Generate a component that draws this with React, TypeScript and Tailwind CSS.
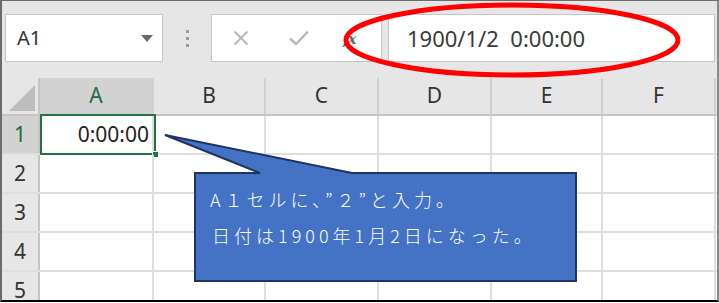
import React from "react";

const cols = [
  { name: "A", w: "w-[114px]" },
  { name: "B", w: "w-[112px]" },
  { name: "C", w: "w-[113px]" },
  { name: "D", w: "w-[113px]" },
  { name: "E", w: "w-[111px]" },
  { name: "F", w: "w-[113px]" },
];

const rows = [1, 2, 3, 4, 5];

export default function App() {
  return (
    <div className="relative h-[303px] w-[719px] overflow-hidden bg-white font-['Noto_Sans','Noto_Sans_CJK_JP',sans-serif]">
      <div className="h-[302px] w-[719px] overflow-hidden border-t border-l-2 border-r-2 border-b-2 border-t-[#6b6b6b] border-l-[#6b6b6b] border-r-[#8a8a8a] border-b-black">
        {/* Formula bar */}
        <div className="flex h-[77px] items-start bg-[#e6e6e6] pt-[13px] pl-[3px]">
          <div className="flex h-[48px] w-[158px] items-center justify-between border border-[#c6c6c6] bg-white pl-[11px] pr-[9px]">
            <span className="text-[20px] text-[#333]">A1</span>
            <svg width="12" height="7" viewBox="0 0 12 7">
              <path d="M0 0 L12 0 L6 7 Z" fill="#6b6b6b" />
            </svg>
          </div>
          <div className="flex h-[48px] w-[48px] flex-col items-center justify-center gap-[4px]">
            <span className="h-[3px] w-[3px] bg-[#9a9a9a]" />
            <span className="h-[3px] w-[3px] bg-[#9a9a9a]" />
            <span className="h-[3px] w-[3px] bg-[#9a9a9a]" />
          </div>
          <div className="flex h-[48px] w-[171px] items-center border border-[#c6c6c6] bg-white">
            <svg className="ml-[21px]" width="16" height="16" viewBox="0 0 16 16">
              <path d="M1.5 1.5 L14.5 14.5 M14.5 1.5 L1.5 14.5" stroke="#b9b9b9" strokeWidth="2" />
            </svg>
            <svg className="ml-[40px]" width="20" height="16" viewBox="0 0 20 16">
              <path d="M1 8.5 L7 14 L19 1.5" stroke="#b9b9b9" strokeWidth="2.4" fill="none" />
            </svg>
            <span className="ml-[34px] mt-[2px] font-['DejaVu_Serif',serif] text-[14px] font-bold italic leading-none tracking-[-1px] text-[#6a6a6a]">
              fx
            </span>
          </div>
          <div className="ml-[6px] flex h-[48px] w-[327px] items-center border border-[#c6c6c6] bg-white pl-[18px]">
            <span className="text-[22px] text-[#3a3a3a] whitespace-pre">1900/1/2  0:00:00</span>
          </div>
        </div>

        {/* Column headers */}
        <div className="flex h-[38px] border-b-2 border-[#c4c4c4] bg-[#e6e6e6]">
          <div className="relative w-[38px] border-r-2 border-[#c4c4c4]">
            <svg className="absolute bottom-[3px] right-[3px]" width="26" height="26" viewBox="0 0 26 26">
              <path d="M26 0 L26 26 L0 26 Z" fill="#bdbdbd" />
            </svg>
          </div>
          {cols.map((c) => (
            <div
              key={c.name}
              className={`${c.w} flex items-center justify-center border-r-2 border-[#d0d0d0] text-[21px] ${
                c.name === "A" ? "bg-[#d2d2d2] text-[#1e6b3f]" : "text-[#333]"
              }`}
            >
              {c.name}
            </div>
          ))}
        </div>

        {/* Rows */}
        {rows.map((r) => (
          <div key={r} className="flex h-[39px] border-b-2 border-[#dedede]">
            <div
              className={`flex w-[38px] items-center justify-center border-r-2 border-[#c4c4c4] text-[21px] ${
                r === 1 ? "bg-[#d2d2d2] text-[#1e6b3f]" : "bg-[#e6e6e6] text-[#333]"
              }`}
            >
              {r}
            </div>
            {cols.map((c) => (
              <div key={c.name} className={`${c.w} relative border-r-2 border-[#dedede]`}>
                {r === 1 && c.name === "A" && (
                  <div className="absolute top-[-2px] left-[0px] flex h-[41px] w-[116px] items-center justify-end border-2 border-[#217346] pr-[5px] text-[21px] text-[#222]">
                    0:00:00
                    <span className="absolute right-[-5px] bottom-[-5px] h-[7px] w-[7px] border border-white bg-[#217346]" />
                  </div>
                )}
              </div>
            ))}
          </div>
        ))}
      </div>

      {/* Red highlight ellipse */}
      <svg className="absolute left-[340px] top-[0px]" width="346" height="82" viewBox="0 0 346 82">
        <ellipse cx="172" cy="40" rx="166" ry="35" fill="none" stroke="#ff0000" strokeWidth="5" />
      </svg>

      {/* Callout */}
      <div className="absolute left-[160px] top-[130px] h-[155px] w-[420px]">
        <svg className="absolute inset-0" width="420" height="155" viewBox="0 0 420 155">
          <path
            d="M35 43 L100 43 L5 5 L192 43 L416 43 L416 151 L35 151 Z"
            fill="#4472c4"
            stroke="#1f3461"
            strokeWidth="2"
            strokeLinejoin="miter"
          />
        </svg>
        <div className="relative pl-[50px] pt-[51px] font-['Noto_Sans_CJK_JP',sans-serif] text-[18px] leading-[36px] font-light tracking-[4px] text-white">
          <div>A１セルに、”２”と入力。</div>
          <div className="pl-[2px]">日付は1900年1月2日になった。</div>
        </div>
      </div>
    </div>
  );
}
